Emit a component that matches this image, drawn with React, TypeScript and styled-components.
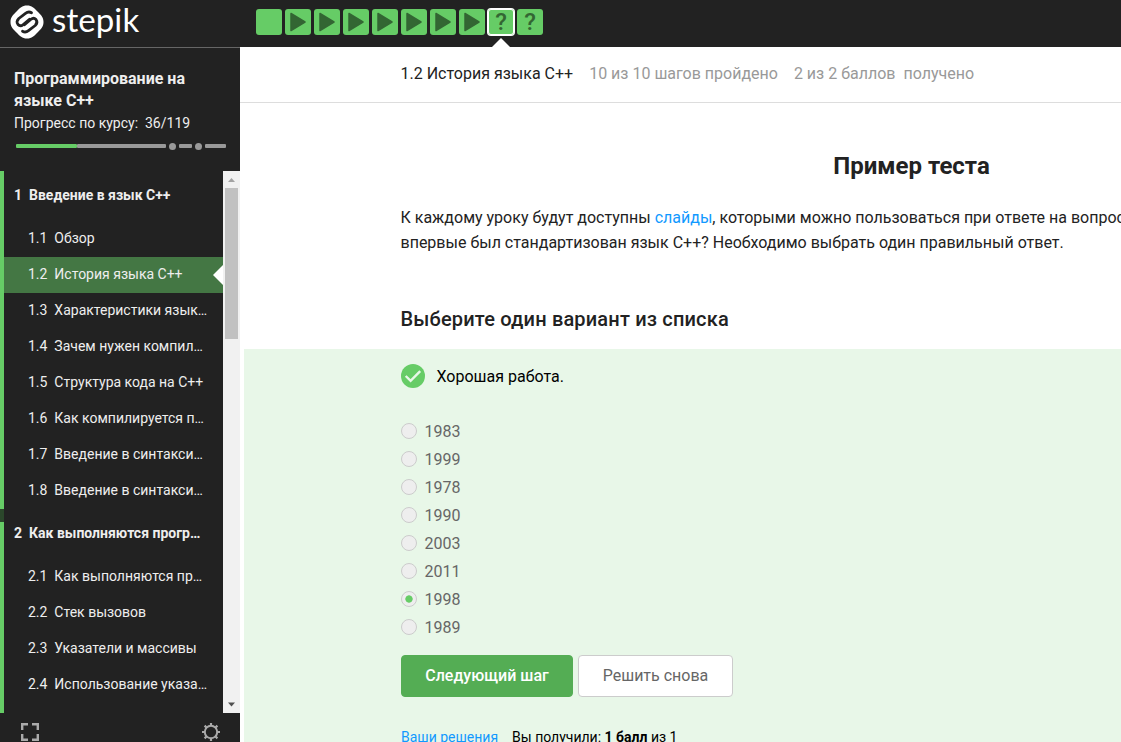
import React from "react";
import styled, { createGlobalStyle } from "styled-components";

const Global = createGlobalStyle`
  * { box-sizing: border-box; }
  body { margin: 0; font-family: Roboto, "Liberation Sans", sans-serif; color: #222; background: #fff; overflow: hidden; }
`;

const Page = styled.div`
  display: flex;
  flex-direction: column;
  width: 100%;
  height: 742px;
  overflow: hidden;
`;
const TopBar = styled.header`
  flex: none;
  display: flex;
  height: 47px;
  background: #222;
`;
const Brand = styled.a`
  display: flex;
  align-items: center;
  width: 256px;
  padding: 0 0 3px 10px;
  color: #fff;
`;
const BrandName = styled.span`
  margin-left: 8px;
  padding-bottom: 6px;
  font: 400 33px/38px Lato, sans-serif;
  letter-spacing: 0.1px;
`;
const Steps = styled.nav`
  display: flex;
  gap: 3px;
  padding-top: 9px;
`;
const Step = styled.a<{ $current?: boolean }>`
  position: relative;
  display: grid;
  place-items: center;
  width: 26px;
  height: 26px;
  border-radius: 3px;
  background: #66cc66;
  color: #336633;
  font: 500 24px/26px Roboto, sans-serif;
  box-shadow: ${(p) => (p.$current ? "inset 0 0 0 1px #fff, 0 0 0 1px #fff" : "none")};
`;
const StepPointer = styled.i`
  position: absolute;
  top: 29px;
  left: 4px;
  border: 9px solid transparent;
  border-top: 0;
  border-bottom-color: #fff;
`;
const Body = styled.div`
  flex: 1;
  display: flex;
  min-height: 0;
`;
const Sidebar = styled.aside`
  flex: none;
  display: flex;
  flex-direction: column;
  width: 240px;
  background: #222;
  color: #eee;
`;
const Course = styled.div`
  flex: none;
  height: 124px;
  border-top: 1px solid #666;
  padding: 20px 14px 0;
`;
const CourseTitle = styled.h1`
  margin: 0;
  font-size: 16px;
  line-height: 22px;
  font-weight: 700;
`;
const CourseProgress = styled.div`
  font-size: 14px;
  line-height: 22px;
  white-space: pre;
`;
const ProgressTrack = styled.div`
  display: flex;
  align-items: center;
  width: 210px;
  height: 8px;
  margin: 8px 0 0 2px;
`;
const Segment = styled.i<{ $w: number; $done?: boolean; $gap?: number }>`
  flex: none;
  width: ${(p) => p.$w}px;
  height: 4px;
  margin-right: ${(p) => p.$gap ?? 0}px;
  border-radius: 1px;
  background: ${(p) => (p.$done ? "#66cc66" : "#999")};
`;
const Dot = styled.i`
  flex: none;
  width: 7px;
  height: 7px;
  margin-right: 3px;
  border-radius: 50%;
  background: #999;
`;
const TocFrame = styled.div`
  flex: none;
  display: flex;
  height: 542px;
`;
const Toc = styled.div`
  width: 223px;
  overflow: hidden;
  background: #2b472b;
`;
const Section = styled.section`
  border-left: 4px solid #66cc66;
  background: #222;
`;
const SectionGap = styled.div`
  height: 13px;
  margin-left: 4px;
  background: #222;
`;
const SectionTitle = styled.h2<{ $first?: boolean }>`
  margin: 0;
  padding: ${(p) => (p.$first ? 13 : 0)}px 10px 0;
  height: ${(p) => (p.$first ? 50 : 37)}px;
  font-size: 14px;
  line-height: 23px;
  font-weight: 700;
  white-space: pre;
`;
const Lesson = styled.a<{ $active?: boolean }>`
  position: relative;
  display: block;
  height: 36px;
  padding-left: 24px;
  font-size: 14px;
  line-height: 35px;
  white-space: pre;
  background: ${(p) => (p.$active ? "#447744" : "transparent")};
`;
const LessonPointer = styled.i`
  position: absolute;
  right: 0;
  top: 8px;
  border: 10px solid transparent;
  border-left: 0;
  border-right-color: #fff;
`;
const Scrollbar = styled.div`
  display: flex;
  flex-direction: column;
  justify-content: space-between;
  width: 17px;
  background: #f1f1f1;
`;
const Thumb = styled.div`
  height: 151px;
  margin: 0 2px auto;
  background: #c1c1c1;
`;
const SideTools = styled.div`
  display: flex;
  justify-content: space-between;
  padding: 10px 20px 0 21px;
`;
const Main = styled.main`
  flex: 1;
  min-width: 0;
  display: flex;
  flex-direction: column;
  overflow: hidden;
`;
const LessonHeader = styled.div`
  flex: none;
  display: flex;
  gap: 16px;
  height: 56px;
  padding-left: 160.5px;
  border-bottom: 1px solid #ddd;
  font-size: 16px;
  line-height: 53px;
  color: #999;
  white-space: pre;
`;
const LessonName = styled.span`
  color: #222;
`;
const Content = styled.div`
  flex: none;
  width: 1183px;
  height: 246px;
  padding: 0 0 0 160.5px;
`;
const Title = styled.h2`
  margin: 48px 0 24px;
  width: 1022px;
  text-align: center;
  font-size: 24px;
  line-height: 30px;
  font-weight: 700;
`;
const Text = styled.p`
  margin: 0;
  font-size: 16px;
  line-height: 25px;
  white-space: nowrap;
`;
const Link = styled.a`
  color: #1199ff;
`;
const Prompt = styled.h3`
  margin: 49px 0 0;
  font-size: 20px;
  line-height: 30px;
  font-weight: 500;
  letter-spacing: 0.17px;
`;
const Quiz = styled.section`
  flex: 1;
  margin-left: 4px;
  padding: 15px 0 0 157px;
  background: #e8f7e8;
`;
const Feedback = styled.div`
  display: flex;
  gap: 11.5px;
  height: 24px;
  margin-bottom: 29px;
  font-size: 16px;
  line-height: 25px;
  color: #000;
`;
const Option = styled.label`
  display: flex;
  align-items: center;
  gap: 7.5px;
  height: 28px;
  font-size: 16px;
  color: #666;
`;
const Radio = styled.span<{ $on?: boolean }>`
  width: 16px;
  height: 16px;
  border: 1px solid #ccc;
  border-radius: 50%;
  background: ${(p) => (p.$on ? "radial-gradient(circle, #66cc66 3.3px, #eee 4px)" : "#eee")};
`;
const Actions = styled.div`
  display: flex;
  gap: 5px;
  margin-top: 14px;
`;
const Button = styled.button<{ $primary?: boolean }>`
  width: ${(p) => (p.$primary ? 172 : 155)}px;
  height: 42px;
  padding: 0 0 2px;
  border: 1px solid ${(p) => (p.$primary ? "#54ad54" : "#ccc")};
  border-radius: 4px;
  background: ${(p) => (p.$primary ? "#54ad54" : "#fff")};
  color: ${(p) => (p.$primary ? "#fff" : "#666")};
  font: ${(p) => (p.$primary ? 500 : 400)} 16px Roboto, sans-serif;
`;
const Result = styled.div`
  display: flex;
  gap: 14px;
  margin-top: 30px;
  font-size: 14px;
  line-height: 20px;
  color: #000;
`;

const LogoMark = () => (
  <svg width="34" height="34" viewBox="0 0 34 34">
    <path d="M17 .5C22 .5 24 3 27.500 6.500S33.500 12 33.500 17 31 24 27.500 27.500 22 33.500 17 33.500 10 31 6.500 27.500.5 22 .5 17 3 10 6.500 6.500 12 .5 17 .5Z" fill="#fff" />
    <g fill="none" stroke="#222" strokeWidth="2.800" strokeLinecap="round" strokeLinejoin="round">
      <path d="M21.500 7.700Q18.500 6 15.500 8.300L8.800 13.500Q5.800 16.500 8 19.500Q10.300 22 13 19.700L19.500 14.200" />
      <path d="M12.500 26.300Q15.500 28 18.500 25.700L25.200 20.500Q28.200 17.500 26 14.500Q23.700 12 21 14.300L14.500 19.800" />
    </g>
  </svg>
);
const Play = () => (
  <svg width="26" height="26" viewBox="0 0 26 26">
    <path d="M6 4.500 20 13 6 21.500Z" fill="#336633" stroke="#336633" strokeWidth="1.500" strokeLinejoin="round" />
  </svg>
);
const Arrow = ({ down }: { down?: boolean }) => (
  <svg width="17" height="17" viewBox="0 0 17 17">
    <path d={down ? "M5 6.500h7L8.500 10.500Z" : "M5 11h7L8.500 7Z"} fill={down ? "#505050" : "#a3a3a3"} />
  </svg>
);
const Check = () => (
  <svg width="24" height="24" viewBox="0 0 24 24">
    <circle cx="12" cy="12" r="12" fill="#66cc66" />
    <path d="m4.700 12 4.900 4.900 9.600-9.800" fill="none" stroke="#e8f7e8" strokeWidth="2.400" />
  </svg>
);
const Expand = () => (
  <svg width="18" height="18" viewBox="0 0 18 18" fill="none" stroke="#aaa" strokeWidth="2.400">
    <path d="M1.200 7V1.200H7M11 1.200h5.800V7M16.800 11v5.800H11M7 16.800H1.200V11" />
  </svg>
);
const Gear = () => (
  <svg width="18" height="18" viewBox="0 0 18 18" fill="none" stroke="#aaa">
    <circle cx="9" cy="9" r="6.200" strokeWidth="2" />
    <path d="M9 0v3M9 15v3M0 9h3M15 9h3M2.600 2.600l2.100 2.100M13.300 13.300l2.100 2.100M15.400 2.600l-2.100 2.100M4.700 13.300l-2.100 2.100" strokeWidth="2.200" />
  </svg>
);

const first = ["1.1  Обзор", "1.2  История языка C++", "1.3  Характеристики язык…", "1.4  Зачем нужен компил…", "1.5  Структура кода на C++", "1.6  Как компилируется п…", "1.7  Введение в синтакси…", "1.8  Введение в синтакси…"];
const second = ["2.1  Как выполняются пр…", "2.2  Стек вызовов", "2.3  Указатели и массивы", "2.4  Использование указа…"];
const years = ["1983", "1999", "1978", "1990", "2003", "2011", "1998", "1989"];

export default function App() {
  return (
    <Page>
      <Global />
      <TopBar>
        <Brand><LogoMark /><BrandName>stepik</BrandName></Brand>
        <Steps>
          <Step />
          {Array.from({ length: 7 }, (_, i) => <Step key={i}><Play /></Step>)}
          <Step $current>?<StepPointer /></Step>
          <Step>?</Step>
        </Steps>
      </TopBar>
      <Body>
        <Sidebar>
          <Course>
            <CourseTitle>Программирование на языке C++</CourseTitle>
            <CourseProgress>Прогресс по курсу:  36/119</CourseProgress>
            <ProgressTrack>
              <Segment $w={61} $done /><Segment $w={89} $gap={3} />
              <Dot /><Segment $w={13} $gap={3} />
              <Dot /><Segment $w={21} />
            </ProgressTrack>
          </Course>
          <TocFrame>
            <Toc>
              <Section>
                <SectionTitle $first>1  Введение в язык C++</SectionTitle>
                {first.map((t, i) => <Lesson key={t} $active={i === 1}>{t}{i === 1 && <LessonPointer />}</Lesson>)}
              </Section>
              <SectionGap />
              <Section>
                <SectionTitle>2  Как выполняются прогр…</SectionTitle>
                {second.map((t) => <Lesson key={t}>{t}</Lesson>)}
                <SectionGap />
              </Section>
            </Toc>
            <Scrollbar><Arrow /><Thumb /><Arrow down /></Scrollbar>
          </TocFrame>
          <SideTools><Expand /><Gear /></SideTools>
        </Sidebar>
        <Main>
          <LessonHeader>
            <LessonName>1.2 История языка C++</LessonName>
            <span>10 из 10 шагов пройдено</span>
            <span>2 из 2 баллов  получено</span>
          </LessonHeader>
          <Content>
            <Title>Пример теста</Title>
            <Text>К каждому уроку будут доступны <Link>слайды</Link>, которыми можно пользоваться при ответе на вопросы. В каком году<br />впервые был стандартизован язык C++? Необходимо выбрать один правильный ответ.</Text>
            <Prompt>Выберите один вариант из списка</Prompt>
          </Content>
          <Quiz>
            <Feedback><Check />Хорошая работа.</Feedback>
            {years.map((y) => <Option key={y}><Radio $on={y === "1998"} />{y}</Option>)}
            <Actions><Button $primary>Следующий шаг</Button><Button>Решить снова</Button></Actions>
            <Result><Link>Ваши решения</Link><span>Вы получили: <b>1 балл</b> из 1</span></Result>
          </Quiz>
        </Main>
      </Body>
    </Page>
  );
}
